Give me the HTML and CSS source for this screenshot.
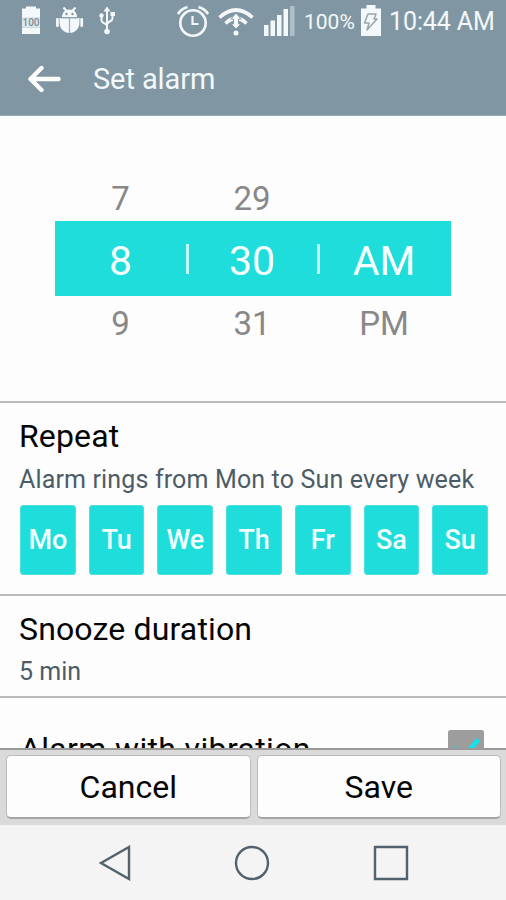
FILE: index.html
```html
<!DOCTYPE html>
<html lang="en">
<head>
<meta charset="utf-8">
<title>Set alarm</title>
<link rel="stylesheet" href="styles.css">
</head>
<body>
<div class="screen">
  <header class="top">
    <div class="status">
      <svg class="i-full" width="20" height="30" viewBox="0 0 20 30">
        <path fill="#f3f8fa" d="M5 3.500V1.500h10v2h4V12H1V3.500zM1 22.500h18V29H1z"/>
        <path fill="#dfe7eb" d="M1 12h18v10.500H1z"/>
        <text class="tiny" x="10" y="21.300" text-anchor="middle">100</text>
      </svg>
      <svg class="i-bug" width="28" height="30" viewBox="0 0 28 30" fill="#f3f8fa">
        <path d="M7.500 2.500l3.500 4M19.500 2.500l-3.500 4" stroke="#f3f8fa" stroke-width="2"/>
        <path d="M6 12c0-4.500 3-7.500 7.500-7.500S21 7.500 21 12z"/>
        <path d="M3.500 13h20v4.500c0 6-4.500 10.500-10 10.500S3.500 23.500 3.500 17.500z"/>
        <rect y="13" width="2.800" height="9" rx="1.200"/><rect x="24.300" y="13" width="2.800" height="9" rx="1.200"/>
        <path d="M13.500 13v15M5 13h17" stroke="#9aadb6" stroke-width="1.200"/>
        <circle cx="10.500" cy="9" r="1.200" fill="#8098a3"/><circle cx="16.500" cy="9" r="1.200" fill="#8098a3"/>
      </svg>
      <svg class="i-usb" width="16" height="30" viewBox="0 0 16 30" fill="none" stroke="#f3f8fa" stroke-width="2">
        <path d="M8 5v20M2.500 11v4.500c0 3 5.500 2.500 5.500 5.500M13.500 9v4.500c0 3-5.500 3-5.500 6"/>
        <path d="M8 1.500l3.500 5h-7z" fill="#f3f8fa" stroke="none"/>
        <circle cx="2.500" cy="10.500" r="2.200" fill="#f3f8fa" stroke="none"/><path d="M11.500 7H16v4h-4.500z" fill="#f3f8fa" stroke="none"/>
        <circle cx="8" cy="26.500" r="2.800" fill="#f3f8fa" stroke="none"/>
      </svg>
      <svg class="i-alarm" width="32" height="32" viewBox="0 0 32 32" fill="none" stroke="#f3f8fa" stroke-width="2.600">
        <circle cx="16" cy="18" r="12.700"/><path d="M15.500 11v8h6" stroke-width="2.200"/>
        <path d="M1 9Q4 4 10.500 2M31 9Q28 4 21.500 2" stroke-width="2.800"/>
      </svg>
      <svg class="i-wifi" width="36" height="30" viewBox="0 0 36 30" fill="none" stroke="#f3f8fa" stroke-width="3.600">
        <path d="M1.500 10.500Q18-4.500 34.500 10.500"/><path d="M7.500 16.500Q18 6 28.500 16.500"/>
        <path d="M18 6l5 6h-2.500v5H23l-5 5-5-5h2.500v-5H13z" fill="#f3f8fa" stroke="#8b9ca5" stroke-width="1"/>
        <circle cx="18" cy="26" r="2.500" fill="#f3f8fa" stroke="none"/>
      </svg>
      <svg class="i-signal" width="31" height="31" viewBox="0 0 31 31" fill="#f3f8fa">
        <path d="M0 20h4.500v11H0zM6.500 15.500H11V31H6.500zM13 10h4.500v21H13zM19.500 4H24v27h-4.500z"/><path fill="#aebfc7" d="M26 1h4.500v30H26z"/>
      </svg>
      <span class="pct">100%</span>
      <svg class="i-batt" width="20" height="32" viewBox="0 0 20 32">
        <path fill="#f3f8fa" d="M5.500 3.500V0h9v3.500H20V31H0V3.500z"/>
        <path fill="#f3f8fa" stroke="#9ba5aa" stroke-width="1.500" stroke-linejoin="round" d="M7 9h8l-2 5h3L6 25l2-7H3.500z"/>
      </svg>
      <span class="time">10:44 AM</span>
    </div>
    <div class="bar">
      <svg width="34" height="28" viewBox="0 0 34 28" fill="none" stroke="#fff" stroke-width="4.400" stroke-linecap="round" stroke-linejoin="round"><path d="M14.500 3L3.500 14l11 11M4 14h27.500"/></svg>
      <h1>Set alarm</h1>
    </div>
  </header>
  <main class="content">
    <section class="picker">
      <div class="row side"><span>7</span><i></i><span>29</span><i></i><span></span></div>
      <div class="row now"><span>8</span><i class="sep"></i><span>30</span><i class="sep"></i><span>AM</span></div>
      <div class="row side"><span>9</span><i></i><span>31</span><i></i><span>PM</span></div>
    </section>
    <section class="item repeat">
      <h2>Repeat</h2>
      <p>Alarm rings from Mon to Sun every week</p>
      <div class="days"><b>Mo</b><b>Tu</b><b>We</b><b>Th</b><b>Fr</b><b>Sa</b><b>Su</b></div>
    </section>
    <section class="item snooze">
      <h2>Snooze duration</h2>
      <p>5 min</p>
    </section>
    <section class="item vibration">
      <h2>Alarm with vibration</h2>
      <svg class="check" width="36" height="36" viewBox="0 0 36 36"><rect width="36" height="36" rx="2.500" fill="#9d9d9d"/><path d="M7 18l8 9L30.500 9.500" fill="none" stroke="#0ee4ec" stroke-width="4.500"/></svg>
    </section>
  </main>
  <footer class="actions"><button>Cancel</button><button>Save</button></footer>
  <nav class="nav">
    <svg width="32" height="36" viewBox="0 0 32 36"><path d="M2 18L30 2v32z"/></svg>
    <svg width="36" height="36" viewBox="0 0 36 36"><circle cx="18" cy="18" r="16"/></svg>
    <svg width="36" height="36" viewBox="0 0 36 36"><path d="M2 2h32v32H2z"/></svg>
  </nav>
</div>
</body>
</html>
```
FILE: styles.css
```css
* { box-sizing: border-box; }
body { margin: 0; font-family: Roboto, "Liberation Sans", sans-serif; color: #050505; }
h1, h2, p { margin: 0; font-weight: 400; }
svg { display: block; flex: none; }
.screen { width: 506px; height: 900px; display: flex; flex-direction: column; overflow: hidden; background: #fdfdfd; }
.top { height: 116px; flex: none; background: #8097a3; color: #f3f8fa; border-bottom: 1px solid #96a8b1; }
.status { height: 42px; display: flex; align-items: flex-start; padding: 5px 0 0 21px; white-space: nowrap; }
.tiny { font-size: 10px; font-weight: 500; fill: #788c96; }
.i-bug { margin-left: 15px; }
.i-usb { margin-left: 15px; }
.i-alarm { margin-left: 62px; }
.i-wifi { margin: 2px 0 0 9px; }
.i-signal { margin-left: 10px; }
.pct { margin-left: 9px; width: 57px; font-size: 21px; line-height: 34px; }
.i-batt { width: 20px; margin-left: 0; }
.time { margin-left: 8px; font-size: 25px; line-height: 34px; letter-spacing: -.1px; }
.bar { display: flex; align-items: center; height: 73px; padding-left: 27px; }
.bar h1 { margin: 1px 0 0 32px; font-size: 29px; line-height: 36px; letter-spacing: -.1px; }
.content { flex: none; height: 632px; overflow: hidden; }
.picker { height: 287px; padding: 60px 55px 0; border-bottom: 2px solid #bababa; }
.row { display: grid; grid-template-columns: 131px 1px 130px 1px 132px; align-items: center; text-align: center; }
.side { height: 45px; color: #888; font-size: 33px; line-height: 46px; }
.now { height: 75px; padding-top: 5px; background: #1edddb; color: #f7ffff; font-size: 41px; }
.row + .side { height: 54px; line-height: 55px; }
.sep { width: 3px; height: 30px; margin-top: -5px; background: #c4f7f7; }
.item { padding-left: 19px; border-bottom: 2px solid #bababa; }
.item h2 { font-size: 32px; line-height: 38px; letter-spacing: .15px; }
.item p { font-size: 25px; line-height: 30px; letter-spacing: .15px; color: #4c5c67; }
.repeat { height: 193px; padding-top: 14px; }
.repeat p { margin-top: 10px; }
.days { display: flex; gap: 13px; padding: 0 18px 0 1px; margin-top: 10px; }
.days b { flex: 1; height: 70px; border: 1px solid #4de0df; border-radius: 3px; background: #1edddb; color: #f2ffff; font-weight: 500; font-size: 27px; line-height: 69px; text-align: center; }
.snooze { height: 102px; padding-top: 14px; }
.snooze p { margin-top: 9px; letter-spacing: 0; }
.vibration { display: flex; justify-content: space-between; padding: 32px 22px 0 20px; }
.vibration h2 { letter-spacing: .35px; }
.actions { flex: none; height: 77px; display: flex; gap: 6px; padding: 5px 5px 6px 6px; background: #dadada; border-top: 2px solid #999; }
.actions button { flex: 1; height: 64px; padding: 0; border: 1px solid #bbb; border-bottom: 2px solid #a4a4a4; border-radius: 5px; background: #fdfdfd; color: #050505; font: 32px/60px Roboto, sans-serif; }
.nav { height: 75px; display: flex; padding: 20px 97px 0 99px; justify-content: space-between; background: #f4f4f4; }
.nav svg { fill: none; stroke: #51626d; stroke-width: 2.400; }
```
